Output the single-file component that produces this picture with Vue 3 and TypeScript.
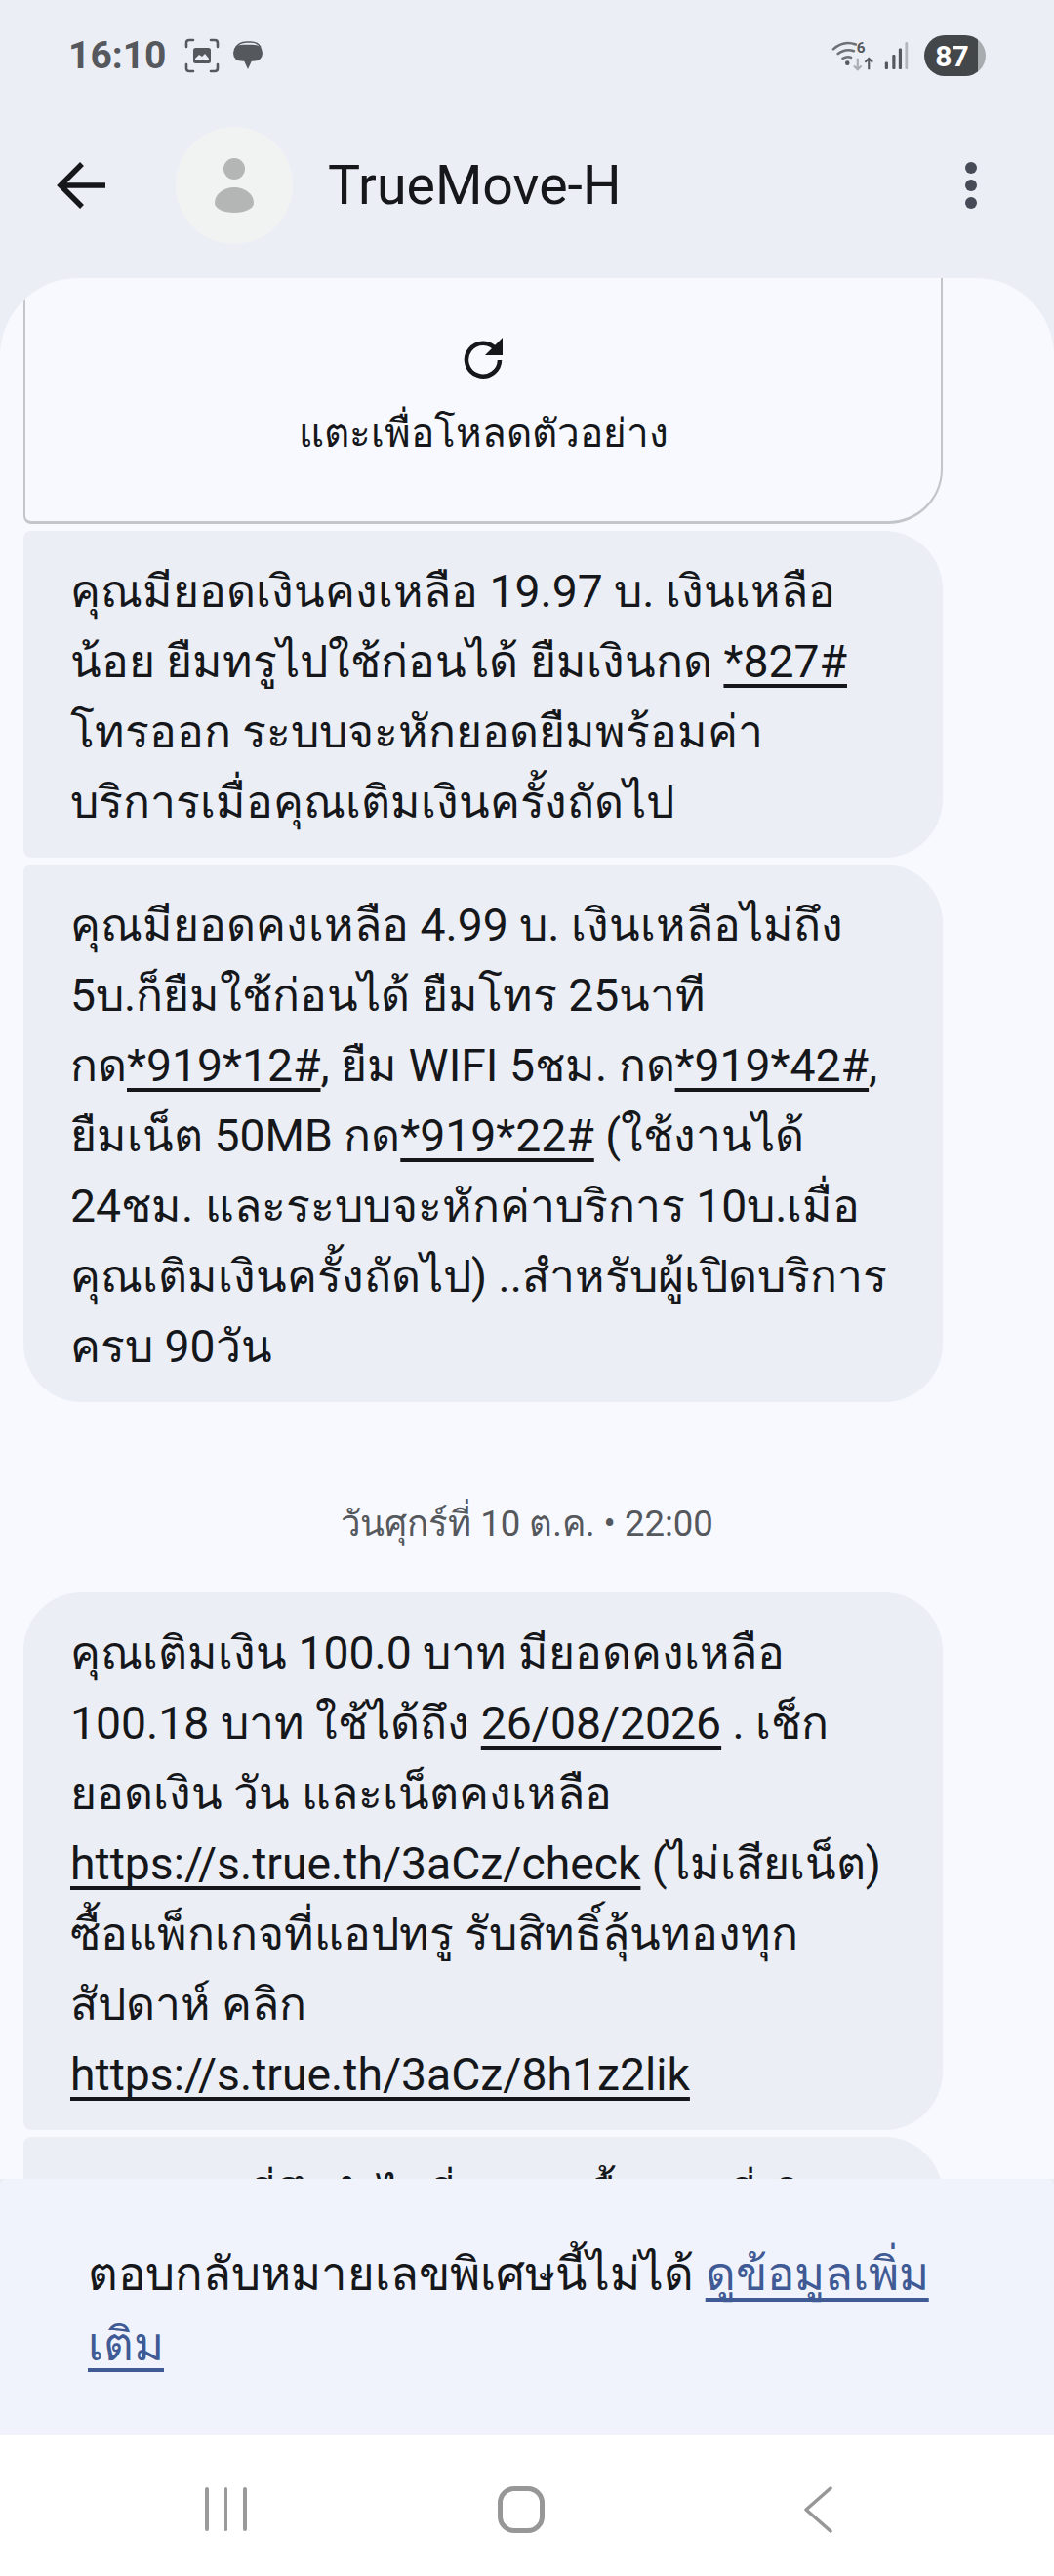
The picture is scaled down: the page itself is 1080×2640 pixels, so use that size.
<template>
  <div class="phone">
    <div class="status-bar">
      <div class="status-left">
        <span class="clock">16:10</span>
        <svg class="shot-icon" width="36" height="36" viewBox="0 0 36 36" fill="none">
          <path d="M2 9V5q0-3 3-3h4M27 2h4q3 0 3 3v4M34 27v4q0 3-3 3h-4M9 34H5q-3 0-3-3v-4" stroke="#55585c" stroke-width="2.600" stroke-linecap="round" />
          <rect x="9" y="10" width="18" height="16" rx="2.500" fill="#55585c" />
          <path d="M11 21l4-4 3 2 3-3 4 5v1H11z" fill="#eaeef6" />
        </svg>
        <svg class="chat-icon" width="32" height="30" viewBox="0 0 34 32">
          <path d="M3 9Q6 1 16 1h4q8 0 11 6" fill="none" stroke="#55585c" stroke-width="1.600" />
          <path d="M1 13Q1 4 12 4h10q11 0 11 9t-11 9h-1l-4 9-4-9h-1Q1 22 1 13z" fill="#55585c" />
        </svg>
      </div>
      <div class="status-right">
        <svg width="44" height="34" viewBox="0 0 46 34" fill="none">
          <path d="M2 10Q13 0 26 5M7 15q8-6 17-3M12 20q5-3 9-1" stroke="#6d7074" stroke-width="2.600" stroke-linecap="round" />
          <circle cx="17" cy="25" r="2.400" fill="#55585c" />
          <text x="27" y="14" class="wifi-six">6</text>
          <path d="M28 20v12M24 28l4 4 4-4" stroke="#a9acb0" stroke-width="2.200" />
          <path d="M40 32V20M36 24l4-4 4 4" stroke="#55585c" stroke-width="2.200" />
        </svg>
        <svg class="signal" width="27" height="30" viewBox="0 0 27 32">
          <rect x="1" y="23" width="3.400" height="8" rx="1.200" fill="#55585c" />
          <rect x="9" y="15" width="3.400" height="16" rx="1.200" fill="#55585c" />
          <rect x="16" y="8" width="3.400" height="23" rx="1.200" fill="#55585c" />
          <rect x="23" y="1" width="3" height="30" rx="1.200" fill="#b3b6ba" />
        </svg>
        <div class="battery"><span>87</span></div>
      </div>
    </div>

    <header class="top-bar">
      <svg class="back" width="50" height="48" viewBox="0 0 50 48" fill="none">
        <path d="M50 24H6M26 2L4 24l22 22" stroke="#15171a" stroke-width="5.500" />
      </svg>
      <div class="avatar">
        <svg width="42" height="56" viewBox="0 0 42 56">
          <ellipse cx="21" cy="11" rx="11" ry="11" fill="#b4b6b6" />
          <path d="M21 30c11 0 20 7 20 16 0 6-9 10-20 10S1 52 1 46c0-9 9-16 20-16z" fill="#b4b6b6" />
        </svg>
      </div>
      <h1 class="title">TrueMove-H</h1>
      <div class="menu"><i></i><i></i><i></i></div>
    </header>

    <main class="thread">
      <div class="preview-card">
        <svg width="44" height="44" viewBox="0 0 44 44" fill="none">
          <path d="M36 14A17 17 0 1 0 39 24" stroke="#15171a" stroke-width="4.500" />
          <path d="M24 19h18V1z" fill="#15171a" />
        </svg>
        <span>แตะเพื่อโหลดตัวอย่าง</span>
      </div>

      <div class="bubble">
        คุณมียอดเงินคงเหลือ 19.97 บ. เงินเหลือ<br />
        น้อย ยืมทรูไปใช้ก่อนได้ ยืมเงินกด <u>*827#</u><br />
        โทรออก ระบบจะหักยอดยืมพร้อมค่า<br />
        บริการเมื่อคุณเติมเงินครั้งถัดไป
      </div>

      <div class="bubble second">
        คุณมียอดคงเหลือ 4.99 บ. เงินเหลือไม่ถึง<br />
        5บ.ก็ยืมใช้ก่อนได้ ยืมโทร 25นาที<br />
        กด<u>*919*12#</u>, ยืม WIFI 5ชม. กด<u>*919*42#</u>,<br />
        ยืมเน็ต 50MB กด<u>*919*22#</u> (ใช้งานได้<br />
        24ชม. และระบบจะหักค่าบริการ 10บ.เมื่อ<br />
        คุณเติมเงินครั้งถัดไป) ..สำหรับผู้เปิดบริการ<br />
        ครบ 90วัน
      </div>

      <div class="date-label">วันศุกร์ที่ 10 ต.ค. • 22:00</div>

      <div class="bubble top-round">
        คุณเติมเงิน 100.0 บาท มียอดคงเหลือ<br />
        100.18 บาท ใช้ได้ถึง <u>26/08/2026</u> . เช็ก<br />
        ยอดเงิน วัน และเน็ตคงเหลือ<br />
        <u>https://s.true.th/3aCz/check</u> (ไม่เสียเน็ต)<br />
        ซื้อแพ็กเกจที่แอปทรู รับสิทธิ์ลุ้นทองทุก<br />
        สัปดาห์ คลิก<br />
        <u>https://s.true.th/3aCz/8h1z2lik</u>
      </div>

      <div class="bubble second">
        รายการ&nbsp; ที่ถึงกำไรที่ กรุณาซื้อยอดที่เติม
      </div>
    </main>

    <section class="notice">
      <p>ตอบกลับหมายเลขพิเศษนี้ไม่ได้ <a>ดูข้อมูลเพิ่ม<br />เติม</a></p>
    </section>

    <nav class="nav-bar">
      <div class="recents"><i></i><i></i><i></i></div>
      <div class="home"></div>
      <svg class="nav-back" width="30" height="48" viewBox="0 0 30 48" fill="none">
        <path d="M28 2L3 24l25 22" stroke="#979797" stroke-width="3.500" stroke-linecap="round" stroke-linejoin="round" />
      </svg>
    </nav>
  </div>
</template>

<script setup lang="ts">
</script>

<style>
html,
body {
  margin: 0;
  background: #ebeef5;
}
</style>

<style scoped>
.phone {
  width: 1080px;
  height: 2640px;
  display: flex;
  flex-direction: column;
  overflow: hidden;
  background: #ebeef5;
  font-family: Roboto, "Noto Sans", "Liberation Sans", sans-serif;
  color: #15171a;
}

.status-bar {
  height: 114px;
  flex: none;
  display: flex;
  justify-content: space-between;
  align-items: center;
  padding: 0 70px;
  box-sizing: border-box;
}

.status-left,
.status-right {
  display: flex;
  align-items: center;
}

.clock {
  font-size: 39px;
  font-weight: 700;
  color: #55585c;
  margin-right: 18px;
}

.chat-icon {
  margin-left: 13px;
}

.wifi-six {
  font: 700 16px Roboto, sans-serif;
  fill: #55585c;
}

.signal {
  margin-left: 9px;
}

.battery {
  width: 63px;
  height: 42px;
  margin-left: 15px;
  border-radius: 21px;
  background: linear-gradient(90deg, #44474a 0 87%, #a9acaf 87%);
  color: #fff;
  font-size: 30px;
  font-weight: 700;
  display: flex;
  align-items: center;
  justify-content: center;
  padding-right: 6px;
  box-sizing: border-box;
}

.top-bar {
  height: 171px;
  flex: none;
  display: flex;
  align-items: center;
  padding: 0 79px 19px 58px;
  box-sizing: border-box;
}

.avatar {
  width: 120px;
  height: 120px;
  margin-left: 72px;
  border-radius: 50%;
  background: #f1f3f3;
  display: flex;
  align-items: center;
  justify-content: center;
}

.title {
  margin: 0 0 0 36px;
  font-size: 55.500px;
  font-weight: 400;
  flex: 1;
}

.menu {
  display: flex;
  flex-direction: column;
  gap: 6px;
  width: 12px;
}

.menu i {
  width: 12px;
  height: 12px;
  border-radius: 50%;
  background: #464b57;
}

.thread {
  height: 1948px;
  flex: none;
  overflow: hidden;
  background: #f7f9ff;
  border-radius: 80px 80px 0 0;
  padding: 0 114px 0 24px;
  box-sizing: border-box;
  display: flex;
  flex-direction: column;
}

.preview-card {
  height: 252px;
  flex: none;
  box-sizing: border-box;
  border: 2px solid #c2c5ca;
  border-bottom-width: 3px;
  border-top: none;
  border-radius: 0 0 56px 8px;
  display: flex;
  flex-direction: column;
  align-items: center;
  padding-top: 60px;
  gap: 22px;
  font-size: 40.500px;
}

.bubble {
  background: #ebeef5;
  padding: 26px 48px 21px;
  font-size: 46.300px;
  line-height: 72px;
  white-space: nowrap;
  border-radius: 8px 60px 60px 8px;
  flex: none;
  margin-top: 7px;
}

.bubble.second {
  border-radius: 8px 60px 60px 60px;
}

.bubble.top-round {
  border-radius: 60px 60px 60px 8px;
  margin-top: 0;
}

.bubble u {
  text-underline-offset: 7px;
  text-decoration-thickness: 4px;
  text-decoration-skip-ink: none;
}

.date-label {
  flex: none;
  width: 1032px;
  text-align: center;
  font-size: 36.500px;
  color: #55585c;
  padding: 100px 0 45px;
  line-height: 50px;
  white-space: nowrap;
}

.notice {
  height: 262px;
  flex: none;
  background: #f0f3fb;
  border-radius: 8px 8px 0 0;
  box-sizing: border-box;
  padding: 62px 40px 0 90px;
  font-size: 47.300px;
  line-height: 72px;
}

.notice p {
  margin: 0;
  white-space: nowrap;
}

.notice a {
  color: #3f5a94;
  text-decoration: underline;
  text-underline-offset: 8px;
  text-decoration-thickness: 4px;
  text-decoration-skip-ink: none;
}

.nav-bar {
  flex: 1;
  background: #fff;
  display: flex;
  align-items: center;
  padding: 8px 0 0 210px;
  box-sizing: border-box;
}

.recents {
  display: flex;
  gap: 16px;
}

.recents i {
  width: 3.500px;
  height: 45px;
  background: #9a9a9a;
  border-radius: 2px;
}

.home {
  width: 48px;
  height: 48px;
  margin-left: 257px;
  box-sizing: border-box;
  border: 5px solid #979797;
  border-radius: 17px;
}

.nav-back {
  margin-left: 265px;
}
</style>
